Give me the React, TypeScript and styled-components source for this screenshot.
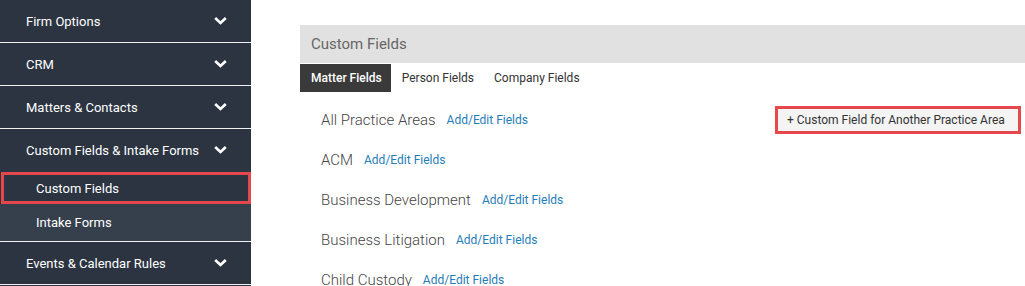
import styled, { createGlobalStyle } from 'styled-components';

const GlobalStyle = createGlobalStyle`
  html, body {
    margin: 0;
    padding: 0;
    background: #fff;
    font-family: Roboto, 'Liberation Sans', Arial, sans-serif;
    -webkit-font-smoothing: antialiased;
  }
`;

const Page = styled.div`
  display: flex;
  flex-direction: row;
  width: 1025px;
  height: 286px;
  overflow: hidden;
`;

const Sidebar = styled.nav`
  width: 251px;
  flex: 0 0 251px;
  display: flex;
  flex-direction: column;
  background: #2b3440;
`;

const NavItem = styled.div<{ $h: number; $line?: boolean }>`
  height: ${(p) => p.$h}px;
  flex: 0 0 auto;
  display: flex;
  align-items: center;
  justify-content: space-between;
  padding: 0 24px 0 26px;
  box-sizing: content-box;
  border-bottom: ${(p) => (p.$line ? '1px solid #f2f2f2' : 'none')};
  color: #fff;
  font-size: 13px;
`;

const SubItem = styled.div<{ $active?: boolean; $h: number; $line?: boolean }>`
  height: ${(p) => p.$h}px;
  flex: 0 0 auto;
  box-sizing: border-box;
  display: flex;
  align-items: center;
  padding-left: ${(p) => (p.$active ? '32px' : '36px')};
  margin-left: ${(p) => (p.$active ? '1px' : '0')};
  background: ${(p) => (p.$active ? '#2b3440' : '#36404c')};
  border: ${(p) => (p.$active ? '3px solid #e5484a' : 'none')};
  border-bottom: ${(p) =>
    p.$active ? '3px solid #e5484a' : p.$line ? '1px solid #f2f2f2' : 'none'};
  color: #fff;
  font-size: 13px;
`;

const Chevron = () => (
  <svg width="13" height="9" viewBox="0 0 13 9">
    <polyline
      points="2.2,2 6.5,6 10.8,2"
      fill="none"
      stroke="#fff"
      strokeWidth="2.7"
      strokeLinecap="square"
    />
  </svg>
);

const Main = styled.main`
  flex: 1;
  display: flex;
  flex-direction: column;
  padding: 25px 0 0 49px;
  min-width: 0;
`;

const HeaderBar = styled.div`
  height: 38px;
  flex: 0 0 auto;
  display: flex;
  align-items: center;
  padding-left: 11px;
  background: #e1e1e1;
  color: #666;
  font-size: 15px;
`;

const Tabs = styled.div`
  display: flex;
  flex: 0 0 auto;
  height: 28px;
  margin-top: 1px;
`;

const Tab = styled.div<{ $active?: boolean }>`
  display: flex;
  align-items: center;
  padding: 0 9px 0 11px;
  background: ${(p) => (p.$active ? '#3a3a3a' : 'transparent')};
  color: ${(p) => (p.$active ? '#fff' : '#333')};
  font-size: 12px;
  font-weight: ${(p) => (p.$active ? 500 : 400)};
`;

const AreaList = styled.div`
  display: flex;
  flex: 0 0 auto;
  flex-direction: column;
  margin-top: 8px;
`;

const AreaRow = styled.div`
  height: 40px;
  flex: 0 0 auto;
  display: flex;
  align-items: center;
  padding: 0 4px 0 21px;
`;

const AreaName = styled.span`
  font-size: 15px;
  font-weight: 300;
  color: #444;
`;

const EditLink = styled.a`
  margin-left: 11px;
  font-size: 12px;
  color: #1f7db8;
  text-decoration: none;
`;

const Spacer = styled.div`
  flex: 1;
`;

const Highlight = styled.div`
  border: 3px solid #e5484a;
  margin-top: -1px;
`;

const AddButton = styled.button`
  display: block;
  height: 22px;
  width: 240px;
  padding: 0 0 0 9px;
  border: none;
  background: #f4f4f4;
  color: #333;
  font-family: inherit;
  font-size: 12px;
  text-align: left;
`;

const areas = ['ACM', 'Business Development', 'Business Litigation', 'Child Custody'];

export default function App() {
  return (
    <>
      <GlobalStyle />
      <Page>
        <Sidebar>
          <NavItem $h={42} $line>
            Firm Options
            <Chevron />
          </NavItem>
          <NavItem $h={42} $line>
            CRM
            <Chevron />
          </NavItem>
          <NavItem $h={42} $line>
            Matters &amp; Contacts
            <Chevron />
          </NavItem>
          <NavItem $h={43}>
            Custom Fields &amp; Intake Forms
            <Chevron />
          </NavItem>
          <SubItem $active $h={32}>
            Custom Fields
          </SubItem>
          <SubItem $h={38} $line>
            Intake Forms
          </SubItem>
          <NavItem $h={42} $line>
            Events &amp; Calendar Rules
            <Chevron />
          </NavItem>
        </Sidebar>
        <Main>
          <HeaderBar>Custom Fields</HeaderBar>
          <Tabs>
            <Tab $active>Matter Fields</Tab>
            <Tab>Person Fields</Tab>
            <Tab>Company Fields</Tab>
          </Tabs>
          <AreaList>
            <AreaRow>
              <AreaName>All Practice Areas</AreaName>
              <EditLink href="#">Add/Edit Fields</EditLink>
              <Spacer />
              <Highlight>
                <AddButton>+ Custom Field for Another Practice Area</AddButton>
              </Highlight>
            </AreaRow>
            {areas.map((a) => (
              <AreaRow key={a}>
                <AreaName>{a}</AreaName>
                <EditLink href="#">Add/Edit Fields</EditLink>
              </AreaRow>
            ))}
          </AreaList>
        </Main>
      </Page>
    </>
  );
}
